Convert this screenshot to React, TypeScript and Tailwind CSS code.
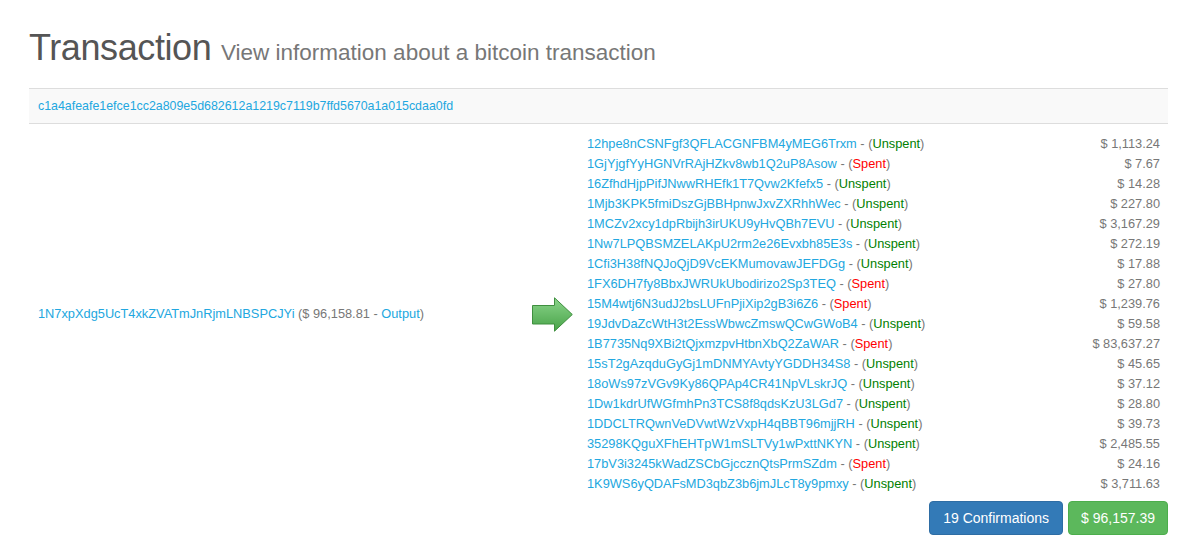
const outputs: { addr: string; spent: boolean; amount: string }[] = [
  { addr: '12hpe8nCSNFgf3QFLACGNFBM4yMEG6Trxm', spent: false, amount: '1,113.24' },
  { addr: '1GjYjgfYyHGNVrRAjHZkv8wb1Q2uP8Asow', spent: true, amount: '7.67' },
  { addr: '16ZfhdHjpPifJNwwRHEfk1T7Qvw2Kfefx5', spent: false, amount: '14.28' },
  { addr: '1Mjb3KPK5fmiDszGjBBHpnwJxvZXRhhWec', spent: false, amount: '227.80' },
  { addr: '1MCZv2xcy1dpRbijh3irUKU9yHvQBh7EVU', spent: false, amount: '3,167.29' },
  { addr: '1Nw7LPQBSMZELAKpU2rm2e26Evxbh85E3s', spent: false, amount: '272.19' },
  { addr: '1Cfi3H38fNQJoQjD9VcEKMumovawJEFDGg', spent: false, amount: '17.88' },
  { addr: '1FX6DH7fy8BbxJWRUkUbodirizo2Sp3TEQ', spent: true, amount: '27.80' },
  { addr: '15M4wtj6N3udJ2bsLUFnPjiXip2gB3i6Z6', spent: true, amount: '1,239.76' },
  { addr: '19JdvDaZcWtH3t2EssWbwcZmswQCwGWoB4', spent: false, amount: '59.58' },
  { addr: '1B7735Nq9XBi2tQjxmzpvHtbnXbQ2ZaWAR', spent: true, amount: '83,637.27' },
  { addr: '15sT2gAzqduGyGj1mDNMYAvtyYGDDH34S8', spent: false, amount: '45.65' },
  { addr: '18oWs97zVGv9Ky86QPAp4CR41NpVLskrJQ', spent: false, amount: '37.12' },
  { addr: '1Dw1kdrUfWGfmhPn3TCS8f8qdsKzU3LGd7', spent: false, amount: '28.80' },
  { addr: '1DDCLTRQwnVeDVwtWzVxpH4qBBT96mjjRH', spent: false, amount: '39.73' },
  { addr: '35298KQguXFhEHTpW1mSLTVy1wPxttNKYN', spent: false, amount: '2,485.55' },
  { addr: '17bV3i3245kWadZSCbGjccznQtsPrmSZdm', spent: true, amount: '24.16' },
  { addr: '1K9WS6yQDAFsMD3qbZ3b6jmJLcT8y9pmxy', spent: false, amount: '3,711.63' },
];

function Arrow() {
  return (
    <svg width="41" height="35" viewBox="0 0 41 35">
      <defs>
        <linearGradient id="arrowFill" x1="0" y1="0" x2="0" y2="1">
          <stop offset="0" stopColor="#8ad48a" />
          <stop offset="1" stopColor="#48a348" />
        </linearGradient>
      </defs>
      <path
        d="M0.5 8.5 H22.5 V0.8 L40.3 17.5 L22.5 34.2 V27 H0.5 Z"
        fill="url(#arrowFill)"
        stroke="#3f8f3f"
        strokeWidth="1"
        strokeLinejoin="miter"
      />
    </svg>
  );
}

export default function App() {
  return (
    <div className="min-h-[555px] bg-white px-[29px] pr-[30px] pt-[28px] font-['Liberation_Sans',Arial,sans-serif]">
      <h1 className="text-[36px] leading-[40px] tracking-[-0.4px] text-[#555]">
        Transaction <span className="text-[22.5px] tracking-normal text-[#777]">View information about a bitcoin transaction</span>
      </h1>

      <div className="mt-[15px] flex h-[36px] items-center border-y border-[#ddd] bg-[#f9f9f9] px-[9px]">
        <a className="text-[12.4px] text-[#22a7e0]">c1a4afeafe1efce1cc2a809e5d682612a1219c7119b7ffd5670a1a015cdaa0fd</a>
      </div>

      <div className="mt-[10px] flex items-center">
        <div className="w-[503px] pl-[9px] text-[12.8px] leading-[20px] text-[#777]">
          <a className="text-[#22a7e0]">1N7xpXdg5UcT4xkZVATmJnRjmLNBSPCJYi</a> ($ 96,158.81 -{' '}
          <a className="text-[#22a7e0]">Output</a>)
        </div>
        <div className="flex w-[41px] items-center">
          <Arrow />
        </div>
        <div className="ml-[14px] flex-1 pr-[8px] text-[12.8px] leading-[20px]">
          {outputs.map((o) => (
            <div key={o.addr} className="flex justify-between">
              <span className="text-[#777]">
                <a className="text-[#22a7e0]">{o.addr}</a> - (
                {o.spent ? <span className="text-[#ff0000]">Spent</span> : <span className="text-[#008000]">Unspent</span>})
              </span>
              <span className="text-[#777]">$ {o.amount}</span>
            </div>
          ))}
        </div>
      </div>

      <div className="mt-[7px] flex justify-end gap-[5px]">
        <button className="h-[34px] rounded-[4px] border border-[#2e6da4] bg-[#337ab7] px-[13px] text-[14px] text-white">
          19 Confirmations
        </button>
        <button className="h-[34px] rounded-[4px] border border-[#4cae4c] bg-[#5cb85c] px-[12px] text-[14px] text-white">
          $ 96,157.39
        </button>
      </div>
    </div>
  );
}
